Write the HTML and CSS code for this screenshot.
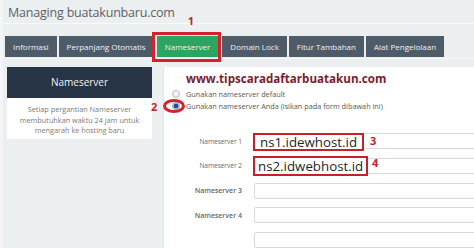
FILE: index.html
```html
<!DOCTYPE html>
<html lang="en">
<head>
  <meta charset="UTF-8">
  <title>Managing buatakunbaru.com</title>
  <link rel="stylesheet" href="styles.css">
</head>
<body>

<div class="page">
  <h1 class="page-title">Managing buatakunbaru.com</h1>

  <!-- tab bar -->
  <div class="tabs">
    <span class="tab">Informasi</span>
    <span class="tab">Perpanjang Otomatis</span>
    <span class="tab tab-active">Nameserver
      <span class="mark mark-tab"></span>
      <span class="num num-1">1</span>
    </span>
    <span class="tab">Domain Lock</span>
    <span class="tab">Fitur Tambahan</span>
    <span class="tab">Alat Pengelolaan</span>
  </div>

  <div class="content">
    <div class="side">
      <div class="side-head">Nameserver</div>
      <div class="side-body">Setiap pergantian Nameserver membutuhkan waktu 24 jam untuk mengarah ke hosting baru</div>
    </div>

    <div class="panel">
      <div class="site-url">www.tipscaradaftarbuatakun.com</div>

      <label class="choice">
        <span class="radio"></span>
        Gunakan nameserver default
      </label>
      <label class="choice">
        <span class="radio radio-on"></span>
        Gunakan nameserver Anda (isikan pada form dibawah ini)
        <span class="ring"></span>
        <span class="num num-2">2</span>
      </label>

      <div class="fields">
        <div class="field">
          <span class="field-label small">Nameserver 1</span>
          <span class="input">
            <span class="ns-box">ns1.idewhost.id</span>
            <span class="num num-side">3</span>
          </span>
        </div>
        <div class="field">
          <span class="field-label small">Nameserver 2</span>
          <span class="input">
            <span class="ns-box ns-box-2">ns2.idwebhost.id</span>
            <span class="num num-side num-4">4</span>
          </span>
        </div>
        <div class="field">
          <span class="field-label">Nameserver 3</span>
          <span class="input"></span>
        </div>
        <div class="field">
          <span class="field-label">Nameserver 4</span>
          <span class="input"></span>
        </div>
        <div class="field">
          <span class="field-label"></span>
          <span class="input"></span>
        </div>
      </div>
    </div>
  </div>
</div>

</body>
</html>
```

FILE: styles.css
```css
body {
  margin: 0;
  font-family: 'Open Sans', sans-serif;
  background-color: #eceff0;
  color: #555;
  overflow: hidden;
}
.page {
  width: 474px;
  height: 248px;
  overflow: hidden;
  border-left: 3px solid #f3f5f6;
  box-sizing: border-box;
}
.page-title {
  margin: 0;
  padding: 4px 0 0 5px;
  height: 19px;
  font-size: 12.5px;
  font-weight: normal;
  line-height: 17px;
  letter-spacing: -0.2px;
  color: #5d6166;
  border-bottom: 1px solid #f8f9fa;
}
/* tabs */
.tabs {
  display: flex;
  gap: 2px;
  margin-top: 12px;
  padding-left: 2px;
  padding-bottom: 1px;
  border-bottom: 1px solid #f6f7f8;
}
.tab {
  position: relative;
  height: 21px;
  line-height: 21px;
  padding: 0 8px;
  font-size: 8px;
  color: #eef1f4;
  background-color: #4e5c6a;
  white-space: nowrap;
}
.tab-active {
  background-color: #2ca562;
  margin: 0 2px 0 1px;
}
.mark-tab {
  position: absolute;
  left: -5px;
  right: -3px;
  top: -4px;
  bottom: -5px;
  border: 3px solid #d4212b;
}
.num {
  position: absolute;
  font-size: 11px;
  font-weight: bold;
  line-height: 11px;
  color: #c4202a;
}
.num-1 {
  left: 31px;
  top: -21px;
}
/* main area */
.content {
  display: grid;
  grid-template-columns: 145px 340px;
  gap: 11px;
  margin-top: 8px;
  padding-left: 4px;
}
.side-head {
  height: 31px;
  line-height: 31px;
  text-align: center;
  font-size: 10px;
  color: #f1f3f5;
  background-color: #263446;
}
.side-body {
  background-color: #fff;
  padding: 6px 8px 3px;
  text-align: center;
  font-size: 7.3px;
  line-height: 10.5px;
  color: #7a7a7a;
}
.panel {
  position: relative;
  height: 190px;
  background-color: #fff;
  padding: 4px 0 0 22px;
  border-left: 1px solid #e3e6e8;
}
.site-url {
  font-size: 11.6px;
  font-weight: bold;
  line-height: 15px;
  color: #7c1d2c;
}
.choice {
  position: relative;
  display: flex;
  align-items: center;
  gap: 6px;
  height: 12px;
  margin-left: -14px;
  font-size: 7.3px;
  color: #585858;
}
.choice:first-of-type {
  margin-top: 2px;
}
.radio {
  width: 8px;
  height: 8px;
  border-radius: 50%;
  box-sizing: border-box;
  border: 1px solid #bdbdbd;
  background: radial-gradient(circle at 50% 40%, #fff, #ddd);
}
.radio-on {
  border-color: #9ab;
  background: radial-gradient(circle, #1d4e8c 0 2px, #8fb3d9 2.5px, #dfe9f3);
}
.ring {
  position: absolute;
  left: -9px;
  top: -1px;
  width: 16px;
  height: 8px;
  border: 3px solid #d4212b;
  border-radius: 50%;
}
.num-2 {
  left: -21px;
  top: 1px;
}
/* nameserver fields */
.fields {
  display: flex;
  flex-direction: column;
  gap: 8.75px;
  margin-top: 21px;
  margin-left: -24px;
}
.field {
  display: flex;
  align-items: center;
  gap: 12px;
}
.field-label {
  width: 80px;
  text-align: right;
  font-size: 7px;
  font-weight: 600;
  color: #666;
}
.field-label.small {
  font-size: 6.5px;
  font-weight: normal;
}
.input {
  position: relative;
  flex: 1;
  height: 16px;
  box-sizing: border-box;
  border: 1px solid #d6d8da;
  border-radius: 2px;
  background-color: #fff;
}
.ns-box {
  position: absolute;
  left: -2px;
  top: -1px;
  height: 18px;
  line-height: 15px;
  padding: 0 5px;
  box-sizing: border-box;
  border: 2px solid #c8202a;
  background-color: #fff;
  font-size: 13.3px;
  color: #1f1f1f;
  white-space: nowrap;
}
.ns-box-2 {
  top: -3px;
  height: 20px;
  line-height: 16px;
  padding: 0 3px;
}
.num-side {
  left: 115px;
  top: 1px;
}
.num-4 {
  left: 117px;
  top: -2px;
}
```
